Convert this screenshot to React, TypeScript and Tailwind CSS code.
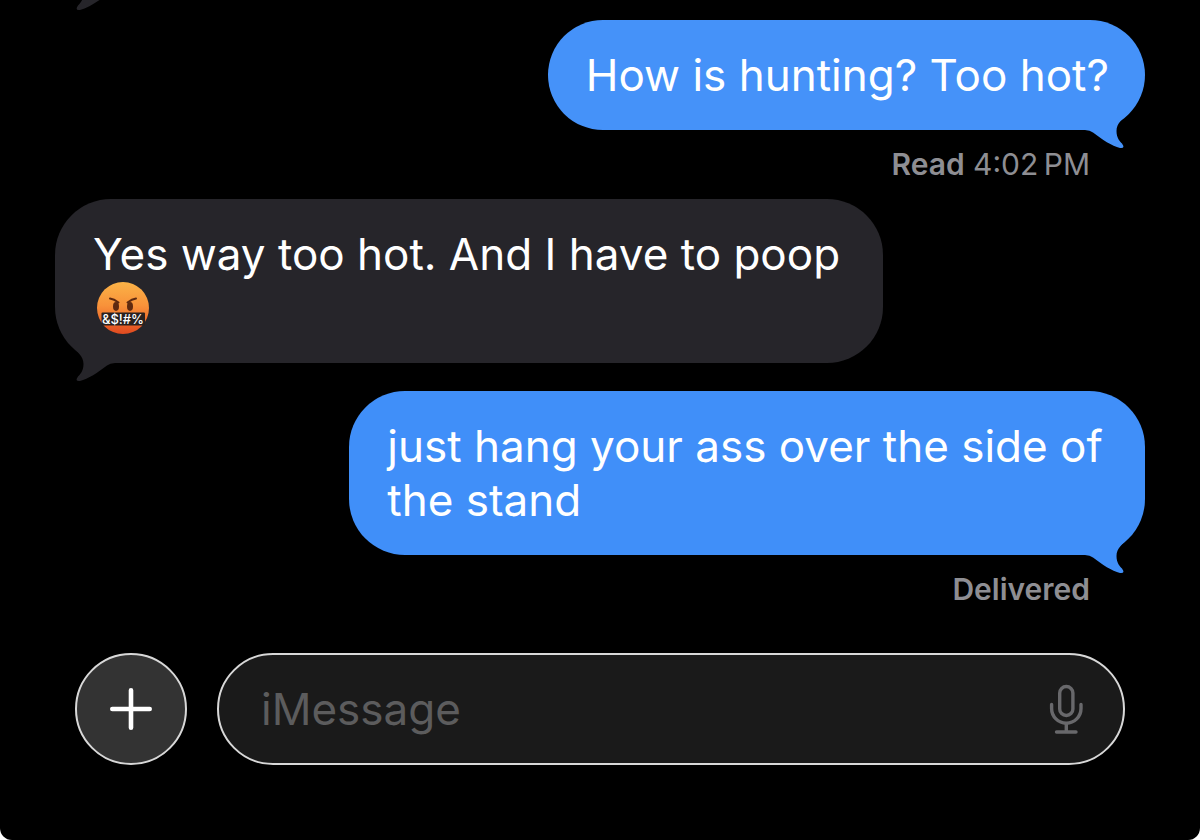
import { useState } from 'react'

type Message = {
  id: number
  mine: boolean
  text: string
  emoji?: boolean
  className: string
  status?: { label: string; time?: string }
}

const messages: Message[] = [
  {
    id: 1,
    mine: true,
    text: 'How is hunting? Too hot?',
    className: 'bg-[#4592f9] text-[#4592f9] max-w-[76%]',
    status: { label: 'Read', time: '4:02\u202fPM' },
  },
  {
    id: 2,
    mine: false,
    text: 'Yes way too hot. And I have to poop',
    emoji: true,
    className: 'bg-[#26252a] text-[#26252a] w-[76%] mb-7',
  },
  {
    id: 3,
    mine: true,
    text: 'just hang your ass over the side of the stand',
    className: 'bg-[#408ff9] text-[#408ff9] max-w-[73%]',
    status: { label: 'Delivered' },
  },
]

function Tail({ className }: { className: string }) {
  return (
    <svg className={`absolute ${className}`} width="60" height="40" viewBox="0 0 60 40" fill="currentColor" aria-hidden="true">
      <path d="M43 3.5C37.5 9.5 31.5 13 31.5 21C31.5 28 35 31.5 37 33.5Q40.5 38.8 35 38C27 36 17 29.5 8 22.5Q5 20 0 20V0H40Z" />
    </svg>
  )
}

function CursingFace() {
  return (
    <svg className="ml-1 my-px block" width="52" height="52" viewBox="0 0 52 52" role="img" aria-label="Cursing face">
      <defs>
        <linearGradient id="face" x1="0" y1="0" x2="0" y2="1">
          <stop offset="0" stopColor="#fbb347" />
          <stop offset="0.45" stopColor="#f8923a" />
          <stop offset="0.8" stopColor="#ec6428" />
          <stop offset="1" stopColor="#df4a20" />
        </linearGradient>
      </defs>
      <circle cx="26" cy="26" r="26" fill="url(#face)" />
      <ellipse cx="19" cy="24.5" rx="3" ry="4.4" fill="#5e2910" />
      <ellipse cx="33" cy="24.5" rx="3" ry="4.4" fill="#5e2910" />
      <path d="M13 16.5Q17 17 21.5 20.5M39 16.5Q35 17 30.5 20.5" fill="none" stroke="#5e2910" strokeWidth="2" strokeLinecap="round" />
      <rect x="4.5" y="30.5" width="43.5" height="13" rx="1" fill="#29211f" />
      <text x="26" y="42" textAnchor="middle" fontSize="13" fontWeight="500" fill="#fff">
        &amp;$!#%
      </text>
    </svg>
  )
}

function MicIcon() {
  return (
    <svg width="35" height="50" viewBox="0 0 35 50" fill="none" stroke="currentColor" strokeWidth="3.4" strokeLinecap="round" aria-hidden="true">
      <rect x="10.7" y="2.5" width="13.2" height="29" rx="6.6" />
      <path d="M2.6 20.5V24.5A14.7 14.7 0 0 0 32 24.5V20.5M17.3 39.5V48M7.5 48H27" />
    </svg>
  )
}

function Bubble({ message }: { message: Message }) {
  const { mine, text, emoji, className, status } = message
  return (
    <>
      <div className={`relative rounded-[56px] py-7 pr-9 pl-[38px] ${mine ? 'self-end' : 'self-start'} ${className}`}>
        <Tail className={mine ? 'right-0 -bottom-5' : 'left-0 -bottom-5 -scale-x-100'} />
        <p className="relative text-[44px] leading-[54px] text-white">{text}</p>
        {emoji && <CursingFace />}
      </div>
      {status && (
        <p className="my-4 pr-[55px] text-right text-[30px] leading-[37px] text-[#8e8e93]">
          <span className="font-semibold">{status.label}</span>
          {status.time && ` ${status.time}`}
        </p>
      )}
    </>
  )
}

export default function App() {
  const [draft, setDraft] = useState('')

  return (
    <div className="bg-white">
      <main className="relative flex min-h-screen flex-col overflow-hidden rounded-b-xl bg-black pt-5 font-['Inter',sans-serif]">
        <Tail className="left-[55px] -top-7 -scale-x-100 text-[#26252a]" />
        <section className="flex flex-col px-[55px]">
          {messages.map(m => (
            <Bubble key={m.id} message={m} />
          ))}
        </section>
        <form className="mt-[29px] flex items-center gap-[30px] px-[75px]" onSubmit={e => e.preventDefault()}>
          <button
            type="button"
            aria-label="Add attachment"
            className="flex size-28 shrink-0 items-center justify-center rounded-full border-2 border-[#d8d8d8] bg-[#333333] text-white"
          >
            <svg width="44" height="44" viewBox="0 0 44 44" stroke="currentColor" strokeWidth="4.6" strokeLinecap="round" aria-hidden="true">
              <path d="M22 3.3V40.7M3.3 22H40.7" />
            </svg>
          </button>
          <div className="flex h-28 min-w-0 flex-1 items-center rounded-full border-2 border-[#d8d8d8] bg-[#1a1a1a] pr-[39px] pl-[42px]">
            <input
              aria-label="iMessage"
              placeholder="iMessage"
              value={draft}
              onChange={e => setDraft(e.target.value)}
              className="min-w-0 flex-1 bg-transparent text-[44px] leading-[54px] text-white outline-none placeholder:text-[#5c5c5d]"
            />
            <button type="button" aria-label="Dictate" className="text-[#68686b]">
              <MicIcon />
            </button>
          </div>
        </form>
      </main>
    </div>
  )
}
